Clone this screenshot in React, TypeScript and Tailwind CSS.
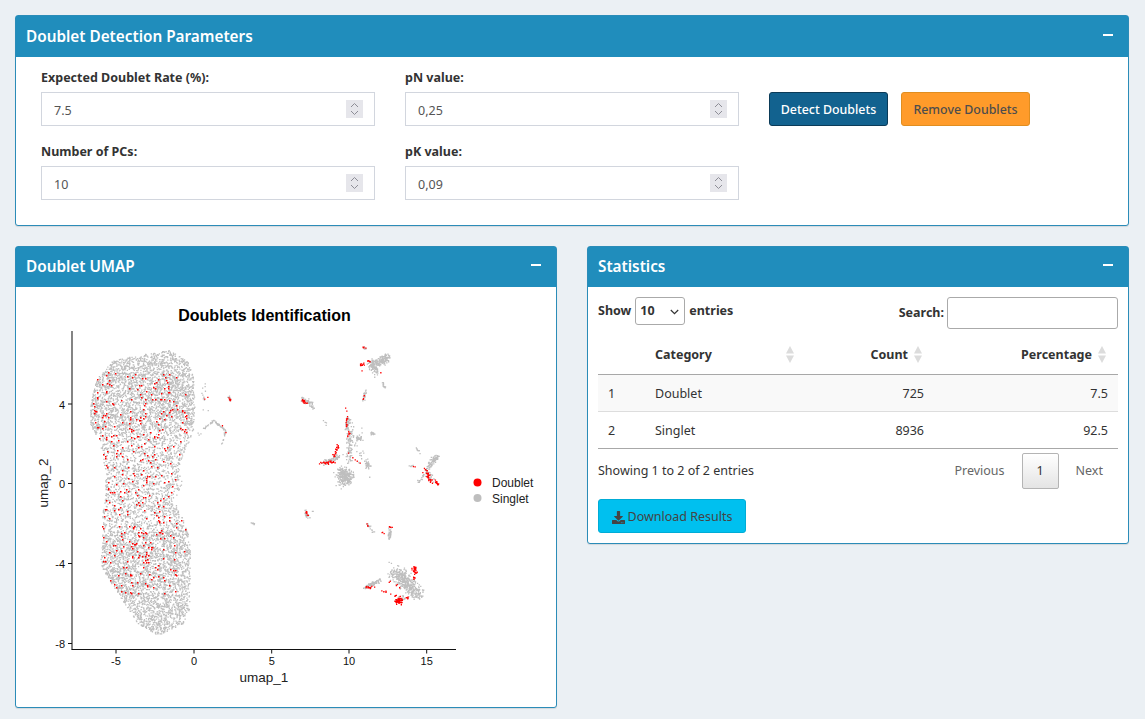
import React, { useMemo } from "react";
import { FaDownload } from "react-icons/fa";

const font = { fontFamily: '"Noto Sans", "Open Sans", sans-serif' };

function Card({ title, className, tall, children }: { title: string; className: string; tall?: boolean; children: React.ReactNode }) {
  return (
    <section className={`flex flex-col rounded-[3px] border border-[#2b8cb8] bg-white shadow-[0_1px_1px_rgba(0,0,0,0.1)] ${className}`}>
      <header className={`flex shrink-0 items-center justify-between bg-[#208dbc] pl-[10px] pr-[15px] text-white ${tall ? "h-[41px]" : "h-[40px]"}`}>
        <h2 className="text-[15.3px] font-semibold leading-none">{title}</h2>
        <span className="mb-[4px] h-[2px] w-[10px] bg-white" />
      </header>
      {children}
    </section>
  );
}

function NumberField({ label, value }: { label: string; value: string }) {
  return (
    <div className="w-[334px]">
      <div className="mb-[4px] h-[21px] text-[12.5px] font-bold leading-[22px] text-[#333]">{label}</div>
      <div className="relative">
        <input
          readOnly
          value={value}
          className="box-border h-[34px] w-full border border-[#d2d6de] bg-white px-3 pt-[2px] text-[12.5px] text-[#555] outline-none"
        />
        <span className="absolute right-[12px] top-[8px] flex h-[18px] w-[17px] items-center justify-center bg-[#e6e6eb]">
          <svg width="11" height="14" viewBox="0 0 11 14" fill="none" stroke="#8d8d96" strokeWidth="1">
            <path d="M2 5l3.5-3.5L9 5" />
            <path d="M2 9l3.5 3.5L9 9" />
          </svg>
        </span>
      </div>
    </div>
  );
}

function SortArrows({ className }: { className: string }) {
  return (
    <svg width="8" height="17" viewBox="0 0 8 17" fill="#dcdcdc" className={`absolute top-[12px] ${className}`}>
      <path d="M4 0L8 7.5H0Z" />
      <path d="M4 17L8 9.5H0Z" />
    </svg>
  );
}

type Seg = [number, number, number, number, number, number];

const MAIN: [number, number][] = [
  [90, 400], [97, 377], [113, 360], [137, 355], [167, 349], [187, 360], [193, 377], [195, 400], [193, 430], [187, 447],
  [178, 467], [182, 483], [175, 497], [178, 510], [187, 527], [190, 550], [189, 610], [183, 623], [158, 635], [137, 623],
  [120, 597], [100, 565], [102, 533], [102, 513], [105, 497], [105, 473], [100, 447], [90, 423],
];

function inside(x: number, y: number, poly: [number, number][]) {
  let c = false;
  for (let i = 0, j = poly.length - 1; i < poly.length; j = i++) {
    const [xi, yi] = poly[i];
    const [xj, yj] = poly[j];
    if (yi > y !== yj > y && x < ((xj - xi) * (y - yi)) / (yj - yi) + xi) c = !c;
  }
  return c;
}

// x1, y1, x2, y2, spread, count
const GRAY: Seg[] = [
  [371, 366, 387, 356, 3.5, 170], [372, 362, 376, 372, 3, 60], [362, 401, 365, 390, 1.2, 24], [382, 381, 384, 387, 0.8, 14],
  [363, 346, 365, 349, 1, 10], [300, 399, 312, 403, 2.5, 45], [311, 405, 313, 408, 1.5, 10], [316, 412, 326, 424, 1, 4],
  [348, 417, 346, 430, 2, 55], [350, 430, 348, 462, 3, 90], [343, 473, 345, 478, 7, 260], [322, 463, 340, 455, 2.5, 60],
  [366, 461, 368, 466, 2.5, 34], [356, 438, 361, 437, 2, 28], [371, 432, 374, 434, 1.5, 14], [352, 418, 362, 476, 7, 30],
  [427, 467, 437, 455, 2.5, 80], [417, 482, 427, 470, 1.5, 22], [415, 447, 419, 453, 1, 8], [408, 465, 413, 465, 0.8, 6],
  [427, 470, 432, 480, 3, 24], [304, 511, 308, 517, 1.5, 30], [316, 513, 300, 505, 0.5, 2], [366, 523, 373, 532, 1, 16],
  [390, 528, 388, 540, 1.5, 30], [364, 587, 380, 579, 1.6, 90], [393, 572, 418, 594, 6, 280], [398, 568, 412, 590, 5, 130],
  [397, 600, 404, 596, 3, 20], [251, 522, 254, 524, 0.8, 10], [203, 428, 213, 420, 0.8, 20], [213, 420, 225, 430, 0.8, 28],
  [225, 430, 222, 443, 0.8, 18], [228, 396, 230, 400, 1.2, 18], [201, 382, 206, 412, 3.5, 12], [197, 430, 200, 438, 1.5, 3],
  [392, 562, 387, 560, 1.5, 2],
];

const RED: Seg[] = [
  [228, 397, 230, 400, 0.8, 5], [221, 424, 226, 433, 0.6, 2], [210, 395, 198, 402, 0.2, 2], [363, 346, 365, 349, 0.8, 5],
  [360, 364, 362, 365, 1.2, 8], [367, 360, 370, 361, 0.8, 4], [361, 372, 366, 355, 0.6, 3], [362, 400, 365, 390, 0.8, 4],
  [379, 372, 381, 372, 0.3, 1], [302, 399, 306, 403, 1.5, 14], [346, 418, 346, 426, 0.8, 9], [333, 456, 337, 446, 1.5, 22],
  [319, 463, 334, 461, 1.4, 24], [344, 400, 350, 440, 1.5, 6], [346, 450, 361, 465, 2, 5], [348, 432, 348, 436, 1.5, 4],
  [426, 470, 430, 481, 2, 28], [434, 480, 438, 484, 1, 14], [409, 465, 416, 466, 0.5, 2], [421, 480, 424, 464, 0.5, 2],
  [305, 510, 308, 517, 0.6, 7], [366, 523, 368, 527, 0.6, 3], [389, 526, 391, 527, 0.6, 4], [381, 531, 387, 535, 1, 3],
  [365, 586, 370, 587, 1, 8], [372, 586, 400, 597, 1.5, 12], [413, 567, 415, 572, 1.8, 30], [411, 575, 414, 579, 1.2, 5],
  [397, 600, 399, 601, 3, 44], [405, 598, 408, 597, 1, 5], [385, 578, 405, 590, 1.5, 5],
];

function usePoints() {
  return useMemo(() => {
    let s = 1337;
    const r = () => {
      s = (s + 0x6d2b79f5) | 0;
      let t = Math.imul(s ^ (s >>> 15), 1 | s);
      t = (t + Math.imul(t ^ (t >>> 7), 61 | t)) ^ t;
      return ((t ^ (t >>> 14)) >>> 0) / 4294967296;
    };
    const gauss = () => (r() + r() + r() - 1.5) * 1.15;
    const sq = (x: number, y: number, w: number) =>
      `M${x.toFixed(1)} ${y.toFixed(1)}h${w}v${w}h-${w}z`;
    let gray = "";
    let red = "";
    let n = 0;
    while (n < 7600) {
      const x = 89 + r() * 107;
      const y = 348 + r() * 288;
      if (!inside(x, y, MAIN)) continue;
      // the central waist is less dense in the plot
      if (y > 430 && y < 530 && r() < 0.4) continue;
      gray += sq(x, y, 1.3);
      n++;
    }
    n = 0;
    while (n < 400) {
      const x = 92 + r() * 95;
      const y = 372 + r() * 222;
      if (!inside(x, y, MAIN)) continue;
      if (y > 430 && x > 165 && r() < 0.6) continue;
      if (y < 440 && x > 170 && r() < 0.5) continue;
      red += sq(Math.round(x), Math.round(y), 1.5);
      n++;
    }
    const seg = (list: Seg[], w: number) => {
      let out = "";
      for (const [x1, y1, x2, y2, sp, c] of list) {
        for (let i = 0; i < c; i++) {
          const t = r();
          out += sq(x1 + (x2 - x1) * t + gauss() * sp, y1 + (y2 - y1) * t + gauss() * sp, w);
        }
      }
      return out;
    };
    gray += seg(GRAY, 1.3);
    red += seg(RED, 1.3);
    return { gray, red };
  }, []);
}

function UmapPlot() {
  const { gray, red } = usePoints();
  const xt: [number, string][] = [[116, "-5"], [194, "0"], [271.7, "5"], [349, "10"], [426.7, "15"]];
  const yt: [number, string][] = [[404, "4"], [483.5, "0"], [563.5, "-4"], [643.5, "-8"]];
  const tf = '"Liberation Sans", Arial, sans-serif';
  return (
    <svg width="540" height="420" viewBox="16 287 540 420" className="block">
      <text x="264.5" y="321" textAnchor="middle" fontFamily={tf} fontSize="16" fontWeight="700" fill="#000">
        Doublets Identification
      </text>
      <path d={gray} fill="#bebebe" />
      <path d={red} fill="#ff0000" />
      <path d="M72 331V649.5" stroke="#666" strokeWidth="1.6" />
      <path d="M71.5 649.5H456" stroke="#111" strokeWidth="1" />
      {xt.map(([x, l]) => (
        <g key={l}>
          <path d={`M${x} 649.5v4`} stroke="#111" />
          <text x={x} y="665" textAnchor="middle" fontFamily={tf} fontSize="11" fill="#111">{l}</text>
        </g>
      ))}
      {yt.map(([y, l]) => (
        <g key={l}>
          <path d={`M68 ${y}h4`} stroke="#111" />
          <text x="65" y={y + 4.5} textAnchor="end" fontFamily={tf} fontSize="11" fill="#111">{l}</text>
        </g>
      ))}
      <text x="264" y="682" textAnchor="middle" fontFamily={tf} fontSize="13.5" fill="#222">umap_1</text>
      <text transform="translate(47.5 483) rotate(-90)" textAnchor="middle" fontFamily={tf} fontSize="13.5" fill="#222">umap_2</text>
      <circle cx="477.5" cy="482.5" r="4" fill="#ff0000" />
      <circle cx="477.5" cy="498" r="4" fill="#bebebe" />
      <text x="492" y="487" fontFamily={tf} fontSize="12" fill="#222">Doublet</text>
      <text x="492" y="503" fontFamily={tf} fontSize="12" fill="#222">Singlet</text>
    </svg>
  );
}

const thBase = "relative h-[40px] px-[10px] pt-[4px] text-[12.5px] font-bold text-[#333]";
const tdBase = "px-[10px] pt-[3px]";

export default function App() {
  return (
    <div style={font} className="min-h-screen w-full bg-[#ebf0f4] pl-[15px] pt-[15px] text-[#333]">
      <div className="flex w-[1114px] flex-col gap-[20px]">
        <Card title="Doublet Detection Parameters" className="h-[211px]" tall>
          <div className="flex gap-[30px] pl-[25px] pt-[10px]">
            <div className="flex flex-col gap-[15px]">
              <NumberField label="Expected Doublet Rate (%):" value="7.5" />
              <NumberField label="Number of PCs:" value="10" />
            </div>
            <div className="flex flex-col gap-[15px]">
              <NumberField label="pN value:" value="0,25" />
              <NumberField label="pK value:" value="0,09" />
            </div>
            <div className="flex items-start gap-[13px] pt-[25px]">
              <button className="h-[34px] w-[119px] rounded-[3px] border border-[#0b3b58] bg-[#12628f] pt-[2px] text-[12.4px] font-medium text-white">
                Detect Doublets
              </button>
              <button className="h-[34px] w-[129px] rounded-[3px] border border-[#e08e20] bg-[#ff9b2a] pt-[2px] text-[12.4px] font-medium text-[#4d4d4d]">
                Remove Doublets
              </button>
            </div>
          </div>
        </Card>

        <div className="flex items-start gap-[30px]">
          <Card title="Doublet UMAP" className="h-[462px] w-[542px]">
            <UmapPlot />
          </Card>

          <Card title="Statistics" className="h-[298px] w-[542px]">
            <div className="flex flex-col px-[10px] pt-[10px]">
              <div className="flex items-start justify-between">
                <div className="flex h-[28px] items-center gap-[4px] text-[12.5px] font-bold">
                  <span className="pt-[1px]">Show</span>
                  <div className="relative">
                    <select className="h-[28px] w-[50px] appearance-none rounded-[3px] border border-[#aaa] bg-white pl-[4px] text-[12.5px] font-bold text-[#333] outline-none">
                      <option>10</option>
                    </select>
                    <svg width="9" height="6" viewBox="0 0 9 6" fill="none" stroke="#333" strokeWidth="1.2" className="absolute right-[6px] top-[12px]">
                      <path d="M0.8 1l3.7 3.7L8.2 1" />
                    </svg>
                  </div>
                  <span className="pt-[1px]">entries</span>
                </div>
                <div className="flex items-center gap-[3px] text-[12.5px] font-bold">
                  <span className="pt-[1px]">Search:</span>
                  <input readOnly className="h-[32px] w-[171px] rounded-[3px] border border-[#aaa] bg-white outline-none" />
                </div>
              </div>

              <table className="mt-[5px] w-[520px] table-fixed border-collapse text-[12.5px]">
                <thead>
                  <tr className="border-b border-[#a8a8a8]">
                    <th className={`${thBase} w-[47px]`} />
                    <th className={`${thBase} w-[155px] text-left`}>Category<SortArrows className="right-[6px]" /></th>
                    <th className={`${thBase} w-[134px] pr-[26px] text-right`}>Count<SortArrows className="right-[12px]" /></th>
                    <th className={`${thBase} w-[184px] pr-[26px] text-right`}>Percentage<SortArrows className="right-[12px]" /></th>
                  </tr>
                </thead>
                <tbody>
                  <tr className="h-[37px] border-b border-[#ddd] bg-[#f9f9f9]">
                    <td className={tdBase}>1</td>
                    <td className={tdBase}>Doublet</td>
                    <td className={`${tdBase} text-right`}>725</td>
                    <td className={`${tdBase} text-right`}>7.5</td>
                  </tr>
                  <tr className="h-[37px] border-b border-[#a8a8a8]">
                    <td className={tdBase}>2</td>
                    <td className={tdBase}>Singlet</td>
                    <td className={`${tdBase} text-right`}>8936</td>
                    <td className={`${tdBase} text-right`}>92.5</td>
                  </tr>
                </tbody>
              </table>

              <div className="mt-[4px] flex h-[36px] items-start justify-between">
                <span className="mt-[9px] text-[12.5px] leading-[18px]">Showing 1 to 2 of 2 entries</span>
                <div className="flex items-center text-[12.5px] text-[#666]">
                  <span className="mr-[17px] pt-[2px]">Previous</span>
                  <span className="flex h-[36px] w-[37px] items-center justify-center rounded-[2px] border border-[#b4b4b4] bg-gradient-to-b from-white to-[#e4e4e4] pt-[2px] text-[#333]">
                    1
                  </span>
                  <span className="ml-[17px] mr-[15px] pt-[2px]">Next</span>
                </div>
              </div>

              <button className="mt-[10px] flex h-[34px] w-[148px] items-center justify-center gap-[3px] rounded-[3px] border border-[#00acd6] bg-[#00c0ef] pt-[3px] text-[12.5px] text-[#444]">
                <FaDownload className="h-[13px] w-[13px]" />
                Download Results
              </button>
            </div>
          </Card>
        </div>
      </div>
    </div>
  );
}
